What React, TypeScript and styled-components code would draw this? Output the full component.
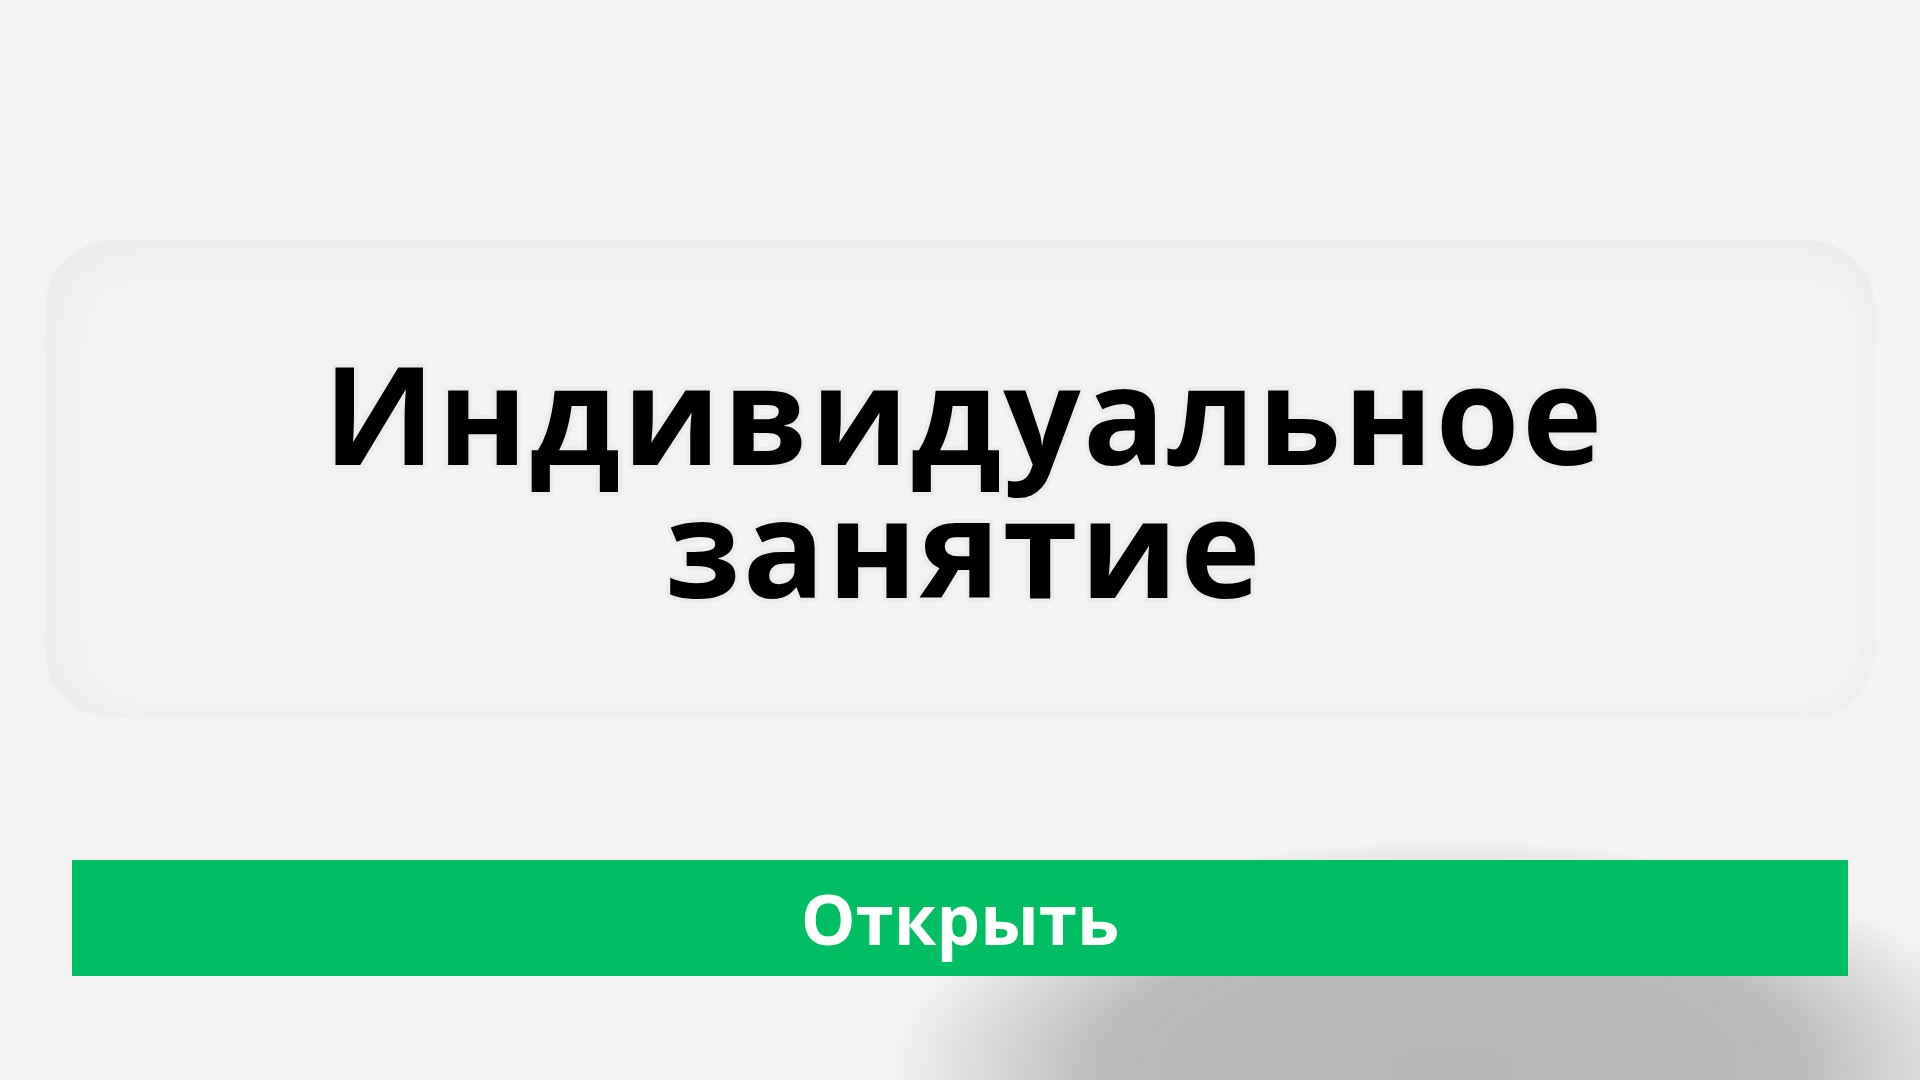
import React from 'react';
import styled, { createGlobalStyle } from 'styled-components';

const GlobalStyle = createGlobalStyle`
  html, body {
    margin: 0;
    padding: 0;
  }
  body {
    background-color: #f3f3f3;
    background-image: radial-gradient(
      ellipse 560px 230px at 1450px 1070px,
      rgba(0, 0, 0, 0.245) 0%,
      rgba(0, 0, 0, 0.23) 62%,
      rgba(0, 0, 0, 0) 100%
    );
    background-repeat: no-repeat;
    font-family: 'Open Sans', 'Noto Sans', sans-serif;
    overflow: hidden;
  }
`;

const Page = styled.div`
  width: 1920px;
  height: 1080px;
  box-sizing: border-box;
  padding-top: 240px;
  display: flex;
  flex-direction: column;
  align-items: center;
`;

const Card = styled.div`
  width: 1830px;
  height: 478px;
  box-sizing: border-box;
  border-radius: 68px;
  background: #f3f3f3;
  box-shadow: inset 12px 12px 70px rgba(0, 0, 0, 0.03),
    inset -4px -4px 40px rgba(0, 0, 0, 0.012);
  display: flex;
  align-items: center;
  justify-content: center;
`;

const Title = styled.h1`
  margin: 0;
  padding-left: 8px;
  font-size: 136px;
  font-weight: 700;
  line-height: 133px;
  letter-spacing: 2.3px;
  text-align: center;
  color: #000;
  text-shadow: 4px 0 0 #ececec, -4px 0 0 #ececec, 0 4px 0 #ececec,
    0 -4px 0 #ececec, 3px 3px 0 #ececec, -3px 3px 0 #ececec,
    3px -3px 0 #ececec, -3px -3px 0 #ececec;
`;

const OpenButton = styled.button`
  margin-top: 142px;
  width: 1776px;
  height: 116px;
  border: none;
  border-radius: 0;
  background: #00bf63;
  color: #fff;
  font-family: 'Open Sans', 'Noto Sans', sans-serif;
  font-size: 69px;
  font-weight: 700;
  line-height: 112px;
  padding: 0;
  cursor: pointer;
`;

export default function App() {
  return (
    <>
      <GlobalStyle />
      <Page>
        <Card>
          <Title>
            Индивидуальное
            <br />
            занятие
          </Title>
        </Card>
        <OpenButton>Открыть</OpenButton>
      </Page>
    </>
  );
}
